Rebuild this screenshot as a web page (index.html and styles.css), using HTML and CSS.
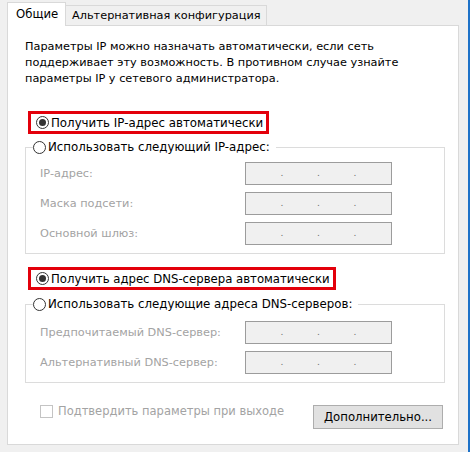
FILE: index.html
```html
<!DOCTYPE html>
<html lang="ru">
<head>
    <meta charset="UTF-8">
    <title>Свойства: IP версии 4 (TCP/IPv4)</title>
    <link rel="stylesheet" href="styles.css">
</head>
<body>
    <div class="window">
        <div class="tabs">
            <div class="tab active">Общие</div>
            <div class="tab">Альтернативная конфигурация</div>
        </div>

        <div class="panel">
            <p class="intro">
                Параметры IP можно назначать автоматически, если сеть<br>
                поддерживает эту возможность. В противном случае узнайте<br>
                параметры IP у сетевого администратора.
            </p>

            <div class="mark mark-ip">
                <label class="radio checked"><span class="circle"></span>Получить IP-адрес автоматически</label>
            </div>

            <fieldset class="group group-ip">
                <legend><label class="radio"><span class="circle"></span>Использовать следующий IP-адрес:</label></legend>
                <div class="rows">
                    <span class="lbl">IP-адрес:</span>
                    <span class="ipbox"><i></i><b>.</b><i></i><b>.</b><i></i><b>.</b><i></i></span>
                    <span class="lbl">Маска подсети:</span>
                    <span class="ipbox"><i></i><b>.</b><i></i><b>.</b><i></i><b>.</b><i></i></span>
                    <span class="lbl">Основной шлюз:</span>
                    <span class="ipbox"><i></i><b>.</b><i></i><b>.</b><i></i><b>.</b><i></i></span>
                </div>
            </fieldset>

            <div class="mark mark-dns">
                <label class="radio checked"><span class="circle"></span>Получить адрес DNS-сервера автоматически</label>
            </div>

            <fieldset class="group group-dns">
                <legend><label class="radio"><span class="circle"></span>Использовать следующие адреса DNS-серверов:</label></legend>
                <div class="rows">
                    <span class="lbl">Предпочитаемый DNS-сервер:</span>
                    <span class="ipbox"><i></i><b>.</b><i></i><b>.</b><i></i><b>.</b><i></i></span>
                    <span class="lbl">Альтернативный DNS-сервер:</span>
                    <span class="ipbox"><i></i><b>.</b><i></i><b>.</b><i></i><b>.</b><i></i></span>
                </div>
            </fieldset>

            <div class="footer-row">
                <label class="check"><span class="box"></span>Подтвердить параметры при выходе</label>
                <button class="btn">Дополнительно...</button>
            </div>
        </div>
    </div>
</body>
</html>
```

FILE: styles.css
```css
:root {
    --bg: #f0f0f0;
    --line: #d9d9d9;
    --group-line: #dcdcdc;
    --disabled: #a3a3a3;
    --red: #e3000b;
}

* {
    box-sizing: border-box;
}

body {
    margin: 0;
    background: var(--bg);
    font-family: "DejaVu Sans", "Noto Sans", sans-serif;
    font-size: 11.3px;
    color: #000;
}

.window {
    width: 470px;
    height: 452px;
    padding: 2px 0 0 7px;
    border-right: 2px solid #1e72c8;
}

/* tabs */
.tabs {
    display: flex;
    align-items: flex-end;
    height: 23px;
}

.tab {
    height: 20px;
    line-height: 19px;
    padding: 0 5px 0 6px;
    border: 1px solid var(--line);
    border-bottom: none;
    border-left: none;
    background: var(--bg);
    white-space: nowrap;
    font-size: 11.3px;
}

.tab.active {
    position: relative;
    z-index: 1;
    width: 59px;
    height: 24px;
    margin-bottom: -1px;
    line-height: 22px;
    padding-left: 8px;
    border-left: 1px solid var(--line);
    background: #fff;
    font-size: 11.7px;
}

/* main page */
.panel {
    width: 452px;
    height: 420px;
    padding-top: 13px;
    border: 1px solid var(--line);
    background: #fff;
}

.intro {
    margin: 0 0 0 17px;
    line-height: 16px;
}

.mark {
    display: inline-flex;
    margin-left: 20px;
    padding: 0 3px 0 5px;
    height: 23px;
    align-items: center;
    border: 3px solid var(--red);
}

.mark-ip {
    margin-top: 24px;
}

.mark-dns {
    margin-top: 13px;
}

.radio,
.check {
    display: flex;
    align-items: center;
    height: 16px;
    white-space: nowrap;
}

.radio {
    font-size: 11.8px;
}

.mark-dns .radio {
    font-size: 11.7px;
}

.circle {
    width: 13px;
    height: 13px;
    margin-right: 2px;
    border: 1px solid #333;
    border-radius: 50%;
    background: #fff;
    display: flex;
    align-items: center;
    justify-content: center;
}

.radio.checked .circle::after {
    content: "";
    width: 7px;
    height: 7px;
    border-radius: 50%;
    background: #333;
}

/* group boxes */
.group {
    width: 420px;
    margin: 5px 0 0 17px;
    padding: 0;
    border: 1px solid var(--group-line);
}

.group legend {
    margin-left: 7px;
    padding: 0 6px 0 0;
    height: 16px;
}

.group-dns {
    margin-top: 6px;
}

.rows {
    display: grid;
    grid-template-columns: 205px 147px;
    row-gap: 7px;
    align-items: center;
    padding: 7px 0 8px 14px;
}

.group-dns .rows {
    padding-top: 9px;
}

.lbl {
    color: var(--disabled);
}

.ipbox {
    height: 23px;
    display: flex;
    align-items: flex-end;
    padding: 0 1px 5px;
    border: 1px solid #9c9c9c;
    background: var(--bg);
    line-height: 12px;
}

.ipbox i {
    flex: 1;
}

.ipbox b {
    width: 3px;
    font-weight: normal;
    font-size: 9px;
    color: #6d6d6d;
    text-align: center;
}

/* bottom row */
.footer-row {
    display: flex;
    align-items: flex-start;
    justify-content: space-between;
    margin: 20px 15px 0 32px;
}

.check {
    color: var(--disabled);
    font-size: 11.5px;
}

.check .box {
    width: 13px;
    height: 13px;
    margin-right: 5px;
    border: 1px solid #c4c4c4;
    background: #fff;
}

.btn {
    width: 130px;
    height: 24px;
    margin-top: 2px;
    padding: 0;
    font: inherit;
    font-size: 11.7px;
    color: #000;
    background: #e1e1e1;
    border: 1px solid #adadad;
}
```
